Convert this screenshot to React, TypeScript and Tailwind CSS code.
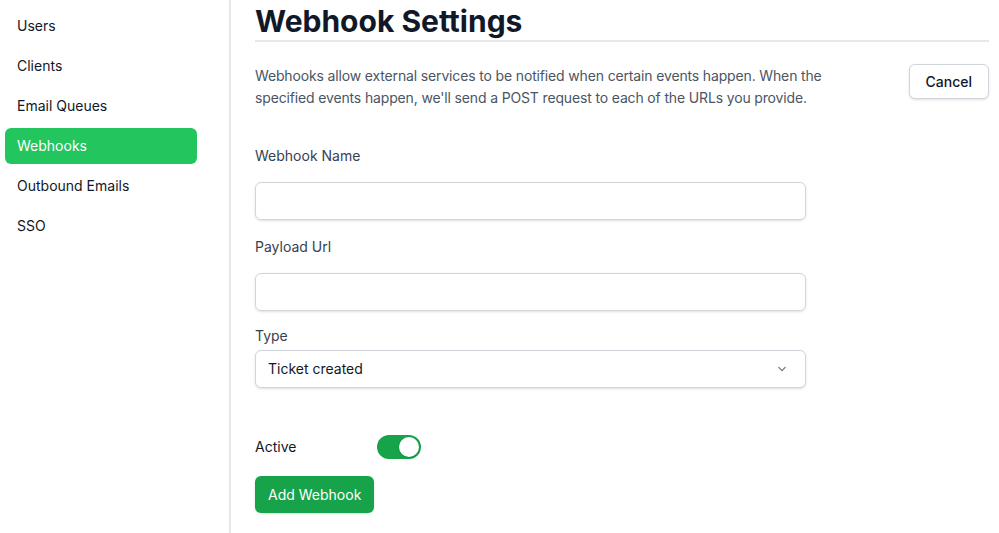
import { useState } from 'react';

const navItems = ['Users', 'Clients', 'Email Queues', 'Webhooks', 'Outbound Emails', 'SSO'];

export default function App() {
    const [active, setActive] = useState(true);
    const [type, setType] = useState('Ticket created');

    return (
        <div className="flex min-h-[533px] w-full bg-white font-['Inter',sans-serif] text-gray-900">
            <aside className="w-[231px] shrink-0 border-r-2 border-gray-200 pt-2 pl-[5px] pr-[32px]">
                <nav className="flex flex-col gap-1">
                    {navItems.map((item) => (
                        <a
                            key={item}
                            className={
                                item === 'Webhooks'
                                    ? 'flex h-9 items-center rounded-md bg-[#22c55e] px-3 text-sm font-normal text-white'
                                    : 'flex h-9 items-center rounded-md px-3 text-sm font-normal text-[#111827]'
                            }
                        >
                            {item}
                        </a>
                    ))}
                </nav>
            </aside>
            <main className="flex-1 pl-6 pr-[10px]">
                <h1 className="border-b-2 border-gray-200 pt-[3px] pb-[1px] text-3xl leading-9 font-bold text-[#111827]">
                    Webhook Settings
                </h1>
                <div className="mt-[22px] flex items-start justify-between">
                    <p className="mt-[1px] max-w-[575px] text-sm leading-[22px] tracking-[-0.15px] text-[#4b5563]">
                        Webhooks allow external services to be notified when certain events happen. When
                        the specified events happen, we'll send a POST request to each of the URLs you
                        provide.
                    </p>
                    <button className="h-[35px] rounded-md border border-gray-300 bg-white px-4 text-sm font-medium text-[#111827] shadow-sm">
                        Cancel
                    </button>
                </div>
                <form className="mt-[37px] w-[551px]">
                    <label className="block text-sm font-normal text-[#374151]">Webhook Name</label>
                    <input className="mt-4 block h-[38px] w-full rounded-md border border-gray-300 px-3 text-sm shadow-sm" />
                    <label className="mt-[17px] block text-sm font-normal text-[#374151]">Payload Url</label>
                    <input className="mt-4 block h-[38px] w-full rounded-md border border-gray-300 px-3 text-sm shadow-sm" />
                    <label className="mt-[15px] block text-sm font-normal text-[#374151]">Type</label>
                    <div className="relative mt-1">
                        <select
                            value={type}
                            onChange={(e) => setType(e.target.value)}
                            className="block h-[38px] w-full appearance-none rounded-md border border-gray-300 bg-white px-3 text-sm text-[#111827] shadow-sm"
                        >
                            <option>Ticket created</option>
                            <option>Ticket updated</option>
                        </select>
                        <svg
                            className="pointer-events-none absolute top-1/2 right-4 h-4 w-4 -translate-y-1/2 text-gray-500"
                            viewBox="0 0 20 20"
                            fill="none"
                            stroke="currentColor"
                            strokeWidth="1.5"
                        >
                            <path d="M6 8l4 4 4-4" strokeLinecap="round" strokeLinejoin="round" />
                        </svg>
                    </div>
                    <div className="mt-[47px] flex items-center">
                        <span className="w-[122px] text-sm font-normal text-[#111827]">Active</span>
                        <button
                            type="button"
                            onClick={() => setActive(!active)}
                            className={
                                active
                                    ? 'flex h-6 w-11 items-center rounded-full bg-[#16a34a] p-0.5'
                                    : 'flex h-6 w-11 items-center rounded-full bg-gray-200 p-0.5'
                            }
                        >
                            <span
                                className={
                                    active
                                        ? 'h-5 w-5 translate-x-5 rounded-full bg-white shadow'
                                        : 'h-5 w-5 translate-x-0 rounded-full bg-white shadow'
                                }
                            />
                        </button>
                    </div>
                    <button
                        type="button"
                        className="mt-[17px] h-[37px] rounded-md bg-[#16a34a] px-[13px] text-sm font-normal text-white shadow-sm"
                    >
                        Add Webhook
                    </button>
                </form>
            </main>
        </div>
    );
}
